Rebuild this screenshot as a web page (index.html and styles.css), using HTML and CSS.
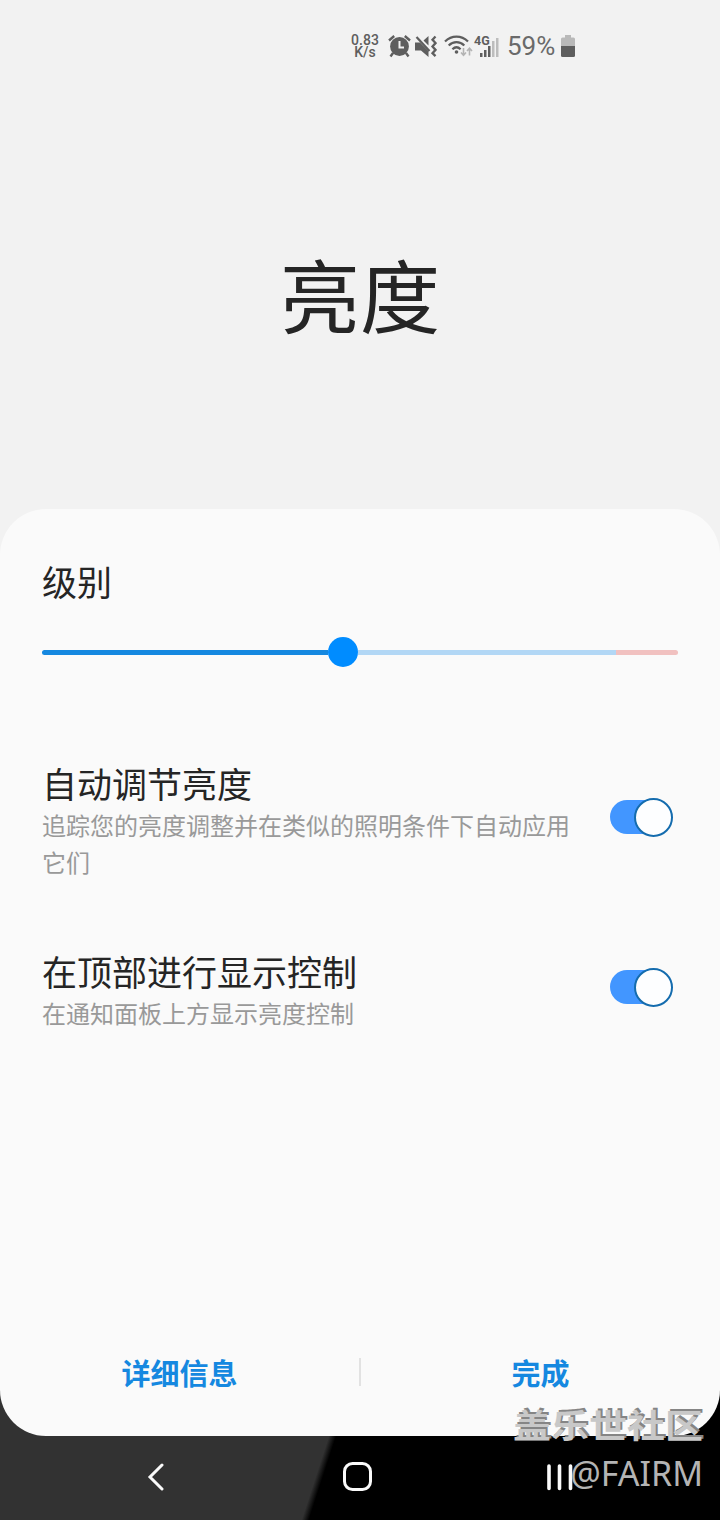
FILE: index.html
```
<!DOCTYPE html>
<html lang="zh-CN">
<head>
    <meta charset="UTF-8">
    <meta name="viewport" content="width=device-width, initial-scale=1.0">
    <title>亮度</title>
    <link rel="stylesheet" href="styles.css">
</head>
<body>
    <div class="screen">
        <header class="status-bar">
            <div class="speed">
                <div>0.83</div>
                <div>K/s</div>
            </div>
            <svg class="icon-alarm" width="23" height="23" viewBox="0 0 23 23">
                <circle cx="11.5" cy="11.5" r="9.4" fill="#5e5e5e"/>
                <path d="M1 5.5L6.2 1M22 5.5L16.8 1M5 18l-2.5 3.5M18 18l2.5 3.5" stroke="#5e5e5e" stroke-width="2.4" fill="none"/>
                <path d="M11.5 6v6.5h4.5" stroke="#f2f2f2" stroke-width="2" fill="none"/>
            </svg>
            <svg class="icon-mute" width="22" height="23" viewBox="0 0 22 23">
                <path d="M0 7.5h5L13.5 16v6L6 15.5H0zM8.5 5.5L13.5 1v9.5z" fill="#5e5e5e"/>
                <path d="M1.5 2l13 14" stroke="#5e5e5e" stroke-width="2.2" fill="none"/>
                <path d="M20.5 1.5l-3 3.2 3 3.4-3 3.4 3 3.4-3 3.2 3 3" stroke="#5e5e5e" stroke-width="2.3" fill="none"/>
            </svg>
            <svg class="icon-wifi" width="29" height="23" viewBox="0 0 29 23">
                <path d="M1 6.5c6.5-6.5 16.5-6.5 23 0M4.7 10.5c4.5-4.5 11.1-4.5 15.6 0M8.4 14.2c2.5-2.4 5.7-2.4 8.2 0" stroke="#5e5e5e" stroke-width="2.2" fill="none"/>
                <circle cx="12.5" cy="17" r="1.8" fill="#5e5e5e"/>
                <path d="M19.5 13v7M17 17.5l2.5 2.7 2.5-2.7M25.5 20.5v-7M23 16l2.5-2.7L28 16" stroke="#b4b4b4" stroke-width="1.6" fill="none"/>
            </svg>
            <div class="signal">
                <span class="network">4G</span>
                <svg width="25" height="23" viewBox="0 0 25 23">
                    <path d="M6 18h2.5v4H6zM10 15h2.5v7H10zM14 11h2.5v11H14z" fill="#5e5e5e"/>
                    <path d="M18 6h2.5v16H18zM22 3h2.5v19H22z" fill="#bdbdbd"/>
                </svg>
            </div>
            <span class="percent">59%</span>
            <svg class="icon-battery" width="14" height="22" viewBox="0 0 14 22">
                <path d="M4 0h6v2.5h2.5Q14 2.5 14 4V11H0V4Q0 2.5 1.5 2.5H4z" fill="#b9b9b9"/>
                <path d="M0 11h14v9.5q0 1.5-1.5 1.5h-11Q0 22 0 20.5z" fill="#5e5e5e"/>
            </svg>
        </header>

        <h1 class="title">亮度</h1>

        <main class="card">
            <section class="level">
                <h2>级别</h2>
                <div class="slider">
                    <div class="fill"></div>
                    <div class="knob"></div>
                    <div class="rest"></div>
                    <div class="limit"></div>
                </div>
            </section>

            <section class="option">
                <div class="option-text">
                    <h2>自动调节亮度</h2>
                    <p>追踪您的亮度调整并在类似的照明条件下自动应用它们</p>
                </div>
                <div class="switch"><div class="thumb"></div></div>
            </section>

            <section class="option option-top">
                <div class="option-text">
                    <h2>在顶部进行显示控制</h2>
                    <p>在通知面板上方显示亮度控制</p>
                </div>
                <div class="switch"><div class="thumb"></div></div>
            </section>

            <footer class="actions">
                <button>详细信息</button>
                <div class="divider"></div>
                <button>完成</button>
            </footer>
        </main>

        <nav class="nav-bar">
            <svg class="nav-back" width="18" height="28" viewBox="0 0 18 28">
                <path d="M15 2L3 14l12 12" stroke="#fafafa" stroke-width="3" stroke-linecap="round" fill="none"/>
            </svg>
            <svg class="nav-home" width="29" height="29" viewBox="0 0 29 29">
                <rect x="1.5" y="1.5" width="26" height="26" rx="8" stroke="#fafafa" stroke-width="3" fill="none"/>
            </svg>
            <svg class="nav-recent" width="26" height="28" viewBox="0 0 26 28">
                <path d="M2 3v22.5M12.5 3v22.5M23.5 3v22.5" stroke="#fafafa" stroke-width="3.6" stroke-linecap="round" fill="none"/>
            </svg>
        </nav>

        <div class="watermark">
            <div class="community">盖乐世社区</div>
            <div class="author">@FAIRM</div>
        </div>
    </div>
</body>
</html>
```

FILE: styles.css
```
* {
    box-sizing: border-box;
}

body {
    margin: 0;
    font-family: "Noto Sans CJK SC", sans-serif;
    color: #252525;
}

h1, h2, p {
    margin: 0;
    font-weight: 400;
}

.screen {
    position: relative;
    display: flex;
    flex-direction: column;
    width: 720px;
    height: 1520px;
    overflow: hidden;
    background: #f2f2f2;
}

/* status bar */
.status-bar {
    display: flex;
    align-items: center;
    height: 92px;
    padding-left: 350px;
    font-family: Roboto, sans-serif;
    color: #5e5e5e;
}

.speed {
    width: 30px;
    margin-right: 8px;
    font-size: 14px;
    font-weight: 500;
    line-height: 12px;
    text-align: center;
}

.icon-mute {
    margin-left: 4px;
}

.icon-wifi {
    margin-left: 7px;
}

.signal {
    position: relative;
    display: flex;
    margin-left: 1px;
}

.network {
    position: absolute;
    top: 0;
    left: 0;
    font-size: 12.5px;
    font-weight: 700;
    line-height: 12px;
}

.percent {
    width: 49px;
    margin-left: 8px;
    font-size: 26px;
    line-height: 30px;
    color: #6a6a6a;
}

.icon-battery {
    margin-left: 5px;
}

.title {
    height: 417px;
    padding-top: 150px;
    font-size: 80px;
    line-height: 100px;
    text-align: center;
}

/* settings card */
.card {
    position: relative;
    z-index: 1;
    display: flex;
    flex-direction: column;
    height: 927px;
    padding: 49px 42px 0;
    background: #fafafa;
    border-radius: 46px;
}

h2 {
    font-size: 35px;
    line-height: 46px;
}

.slider {
    display: flex;
    align-items: center;
    height: 30px;
    margin-top: 33px;
}

.slider div {
    height: 5px;
}

.slider .fill {
    width: 286px;
    background: #1588e0;
    border-radius: 3px 0 0 3px;
}

.slider .knob {
    width: 30px;
    height: 30px;
    background: #008cff;
    border-radius: 50%;
}

.slider .rest {
    flex: 1;
    background: #b2d7f5;
}

.slider .limit {
    width: 62px;
    background: #f1c1c0;
    border-radius: 0 3px 3px 0;
}

.option {
    display: flex;
    justify-content: space-between;
    margin-top: 93px;
}

.option-top {
    margin-top: 68px;
}

.option-text {
    width: 530px;
}

.option p {
    font-size: 24px;
    line-height: 37px;
    color: #999;
}

.switch {
    display: flex;
    justify-content: flex-end;
    align-items: center;
    width: 63px;
    height: 34px;
    margin: 40px 5px 0 0;
    background: linear-gradient(90deg, #4296ff 48px, transparent 48px);
    border-radius: 17px;
}

.option-top .switch {
    margin-top: 22px;
}

.thumb {
    flex: none;
    width: 39px;
    height: 39px;
    background: #fdfeff;
    border: 2px solid #146cae;
    border-radius: 50%;
}

.actions {
    display: flex;
    align-items: center;
    height: 60px;
    margin: auto -42px 34px;
}

.actions button {
    flex: 1;
    padding: 0;
    border: none;
    background: none;
    font-family: inherit;
    font-size: 29px;
    font-weight: 700;
    line-height: 40px;
    color: #1588e0;
}

.divider {
    width: 2px;
    height: 28px;
    background: #e2e2e2;
}

/* navigation bar */
.nav-bar {
    display: flex;
    align-items: center;
    height: 130px;
    margin-top: -46px;
    padding: 43px 0 0 147px;
    background: linear-gradient(108deg, #323232 327px, #000 334px);
}

.nav-home {
    margin-left: 178px;
}

.nav-recent {
    margin-left: 175px;
}

.watermark {
    position: absolute;
    right: 17px;
    bottom: 23px;
    z-index: 2;
    text-align: right;
}

.community {
    font-size: 38px;
    font-weight: 700;
    line-height: 50px;
    color: #c8c8c8;
    text-shadow: 2px -2px 0 #858585;
    transform: scaleY(0.88);
    transform-origin: 50% 50%;
}

.author {
    font-family: "Noto Sans", sans-serif;
    font-size: 34px;
    line-height: 48px;
    color: #b4b4b4;
}
```
